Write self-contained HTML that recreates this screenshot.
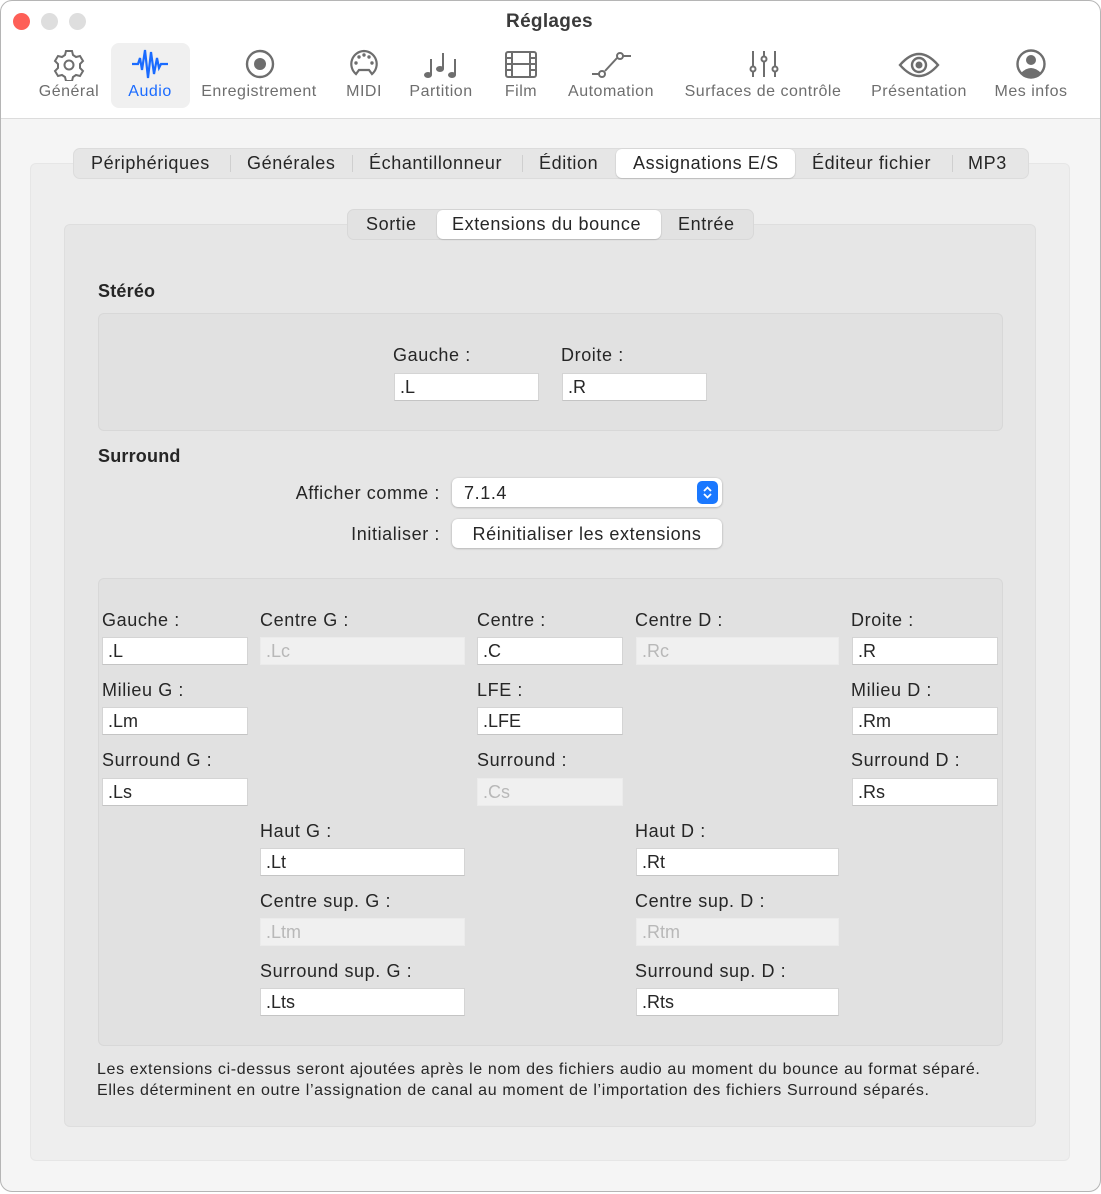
<!DOCTYPE html>
<html><head><meta charset="utf-8"><style>
*{box-sizing:border-box;margin:0;padding:0}
body{width:1101px;height:1194px;background:#fff;font-family:"Liberation Sans",sans-serif;color:#262626;position:relative;overflow:hidden}
.win{position:absolute;left:0;top:0;width:1101px;height:1192px;border-radius:12px;background:#f5f5f5;overflow:hidden}
.wb{position:absolute;left:0;top:0;width:1101px;height:1192px;border:1px solid #b5b5b5;border-radius:12px;pointer-events:none}
.tb{position:absolute;left:0;top:0;width:1101px;height:119px;background:#fff;border-bottom:1px solid #dcdcdc}
.a{position:absolute}
.t{position:absolute;white-space:nowrap;font-size:18px;letter-spacing:0.6px}
.r{text-align:right}
.tl{position:absolute;font-size:16px;color:#6e6e6e;white-space:nowrap;transform:translateX(-50%);top:83px;letter-spacing:0.5px}
.ic{position:absolute;top:47px}
.f{position:absolute;height:28px;background:#fff;border:1px solid #d4d4d4;border-bottom-color:#c4c4c4;font-size:18px;padding-left:5px;line-height:26px}
.f.d{background:#f0f0f0;border-color:#ebebeb;color:#b8b8b8}
.box{position:absolute;border-radius:6px}
</style></head><body>
<div class="win">
<div class="tb">
<div class="a" style="left:13px;top:13px;width:17px;height:17px;border-radius:50%;background:#fe5f57"></div>
<div class="a" style="left:41px;top:13px;width:17px;height:17px;border-radius:50%;background:#dedede"></div>
<div class="a" style="left:69px;top:13px;width:17px;height:17px;border-radius:50%;background:#dedede"></div>
<div class="t" style="left:0;width:1099px;text-align:center;top:11px;font-weight:bold;font-size:19px;color:#3a3a3a;letter-spacing:0.3px">Réglages</div>
<div class="a" style="left:111px;top:43px;width:79px;height:65px;background:#f0f0f0;border-radius:8px"></div>
<svg class="ic" style="left:52px" width="34" height="34" viewBox="0 0 34 34" fill="none" stroke="#6e6e6e" stroke-width="2"><path d="M14 4h6l1 4 3 2 4-1 3 5-3 3v4l3 3-3 5-4-1-3 2-1 4h-6l-1-4-3-2-4 1-3-5 3-3v-4l-3-3 3-5 4 1 3-2z"/><circle cx="17" cy="18" r="4.5"/></svg>
<svg class="ic" style="left:131px" width="38" height="34" viewBox="0 0 38 34" fill="none" stroke="#1a6bff" stroke-width="2.2"><path d="M1 17h6l2-6 2 12 3-20 3 28 3-26 3 22 3-16 2 10 2-4h7"/></svg>
<svg class="ic" style="left:243px" width="34" height="34" viewBox="0 0 34 34"><circle cx="17" cy="17" r="13" fill="none" stroke="#6e6e6e" stroke-width="2.4"/><circle cx="17" cy="17" r="6" fill="#6e6e6e"/></svg>
<svg class="ic" style="left:347px" width="34" height="34" viewBox="0 0 34 34" fill="#6e6e6e"><path d="M17 4a13 13 0 0 0-8 23l3-4h10l3 4a13 13 0 0 0-8-23z" fill="none" stroke="#6e6e6e" stroke-width="2.2"/><circle cx="9" cy="16" r="1.7"/><circle cx="12" cy="10" r="1.7"/><circle cx="17" cy="8" r="1.7"/><circle cx="22" cy="10" r="1.7"/><circle cx="25" cy="16" r="1.7"/></svg>
<svg class="ic" style="left:423px" width="36" height="34" viewBox="0 0 36 34" fill="#6e6e6e" stroke="#6e6e6e" stroke-width="2"><ellipse cx="5" cy="28" rx="4" ry="3" stroke="none"/><path d="M8 28V12" /><ellipse cx="17" cy="22" rx="4" ry="3" stroke="none"/><path d="M20 22V6"/><ellipse cx="29" cy="28" rx="4" ry="3" stroke="none"/><path d="M32 28V12"/></svg>
<svg class="ic" style="left:504px" width="34" height="34" viewBox="0 0 34 34" fill="none" stroke="#6e6e6e" stroke-width="2"><rect x="2" y="5" width="30" height="25" rx="2"/><path d="M8 5v25M26 5v25M8 17h18M2 11h6M2 17h6M2 23h6M26 11h6M26 17h6M26 23h6"/></svg>
<svg class="ic" style="left:591px" width="42" height="34" viewBox="0 0 42 34" fill="none" stroke="#6e6e6e" stroke-width="2"><path d="M1 27h7M14 24l12-13M32 9h8"/><circle cx="11" cy="27" r="3"/><circle cx="29" cy="9" r="3"/></svg>
<svg class="ic" style="left:749px" width="30" height="34" viewBox="0 0 30 34" fill="none" stroke="#6e6e6e" stroke-width="2"><path d="M4 4v26M15 4v26M26 4v26"/><circle cx="4" cy="22" r="2.5" fill="#fff"/><circle cx="15" cy="12" r="2.5" fill="#fff"/><circle cx="26" cy="22" r="2.5" fill="#fff"/></svg>
<svg class="ic" style="left:898px" width="42" height="34" viewBox="0 0 42 34"><path d="M2 18Q21-4 40 18Q21 40 2 18z" fill="none" stroke="#6e6e6e" stroke-width="2.4"/><circle cx="21" cy="18" r="7" fill="none" stroke="#6e6e6e" stroke-width="2.4"/><circle cx="21" cy="18" r="3.5" fill="#6e6e6e"/></svg>
<svg class="ic" style="left:1014px" width="34" height="34" viewBox="0 0 34 34"><circle cx="17" cy="17" r="13.5" fill="none" stroke="#6e6e6e" stroke-width="2.4"/><circle cx="17" cy="13" r="5" fill="#6e6e6e"/><path d="M7 26Q17 16 27 26Q17 34 7 26z" fill="#6e6e6e"/></svg>
<div class="tl" style="left:69px">Général</div>
<div class="tl" style="left:150px;color:#1a6bff">Audio</div>
<div class="tl" style="left:259px">Enregistrement</div>
<div class="tl" style="left:364px">MIDI</div>
<div class="tl" style="left:441px">Partition</div>
<div class="tl" style="left:521px">Film</div>
<div class="tl" style="left:611px">Automation</div>
<div class="tl" style="left:763px">Surfaces de contrôle</div>
<div class="tl" style="left:919px">Présentation</div>
<div class="tl" style="left:1031px">Mes infos</div>
</div>

<div class="box" style="left:30px;top:163px;width:1040px;height:998px;background:#eeeeee;border:1px solid #e6e6e6"></div>
<div class="box" style="left:73px;top:148px;width:956px;height:31px;background:#e6e6e6;border:1px solid #dcdcdc;border-radius:7px"></div>
<div class="box" style="left:616px;top:149px;width:179px;height:29px;background:#fff;box-shadow:0 0.5px 1.5px rgba(0,0,0,.25)"></div>
<div class="a" style="left:230px;top:155px;width:1px;height:17px;background:#cfcfcf"></div>
<div class="a" style="left:352px;top:155px;width:1px;height:17px;background:#cfcfcf"></div>
<div class="a" style="left:522px;top:155px;width:1px;height:17px;background:#cfcfcf"></div>
<div class="a" style="left:952px;top:155px;width:1px;height:17px;background:#cfcfcf"></div>
<div class="t" style="left:91px;top:153px">Périphériques</div>
<div class="t" style="left:247px;top:153px">Générales</div>
<div class="t" style="left:369px;top:153px">Échantillonneur</div>
<div class="t" style="left:539px;top:153px">Édition</div>
<div class="t" style="left:633px;top:153px">Assignations E/S</div>
<div class="t" style="left:812px;top:153px">Éditeur fichier</div>
<div class="t" style="left:968px;top:153px">MP3</div>

<div class="box" style="left:64px;top:224px;width:972px;height:903px;background:#e6e6e6;border:1px solid #dedede"></div>
<div class="box" style="left:347px;top:209px;width:407px;height:31px;background:#e2e2e2;border:1px solid #d8d8d8;border-radius:7px"></div>
<div class="box" style="left:437px;top:210px;width:224px;height:29px;background:#fff;box-shadow:0 0.5px 1.5px rgba(0,0,0,.25)"></div>
<div class="t" style="left:366px;top:214px">Sortie</div>
<div class="t" style="left:452px;top:214px">Extensions du bounce</div>
<div class="t" style="left:678px;top:214px">Entrée</div>

<div class="t" style="left:98px;top:281px;font-weight:bold;letter-spacing:0.2px">Stéréo</div>
<div class="box" style="left:98px;top:313px;width:905px;height:118px;background:#e1e1e1;border:1px solid #d8d8d8"></div>
<div class="t" style="left:393px;top:345px">Gauche :</div>
<div class="t" style="left:561px;top:345px">Droite :</div>
<div class="f" style="left:394px;top:373px;width:145px">.L</div>
<div class="f" style="left:562px;top:373px;width:145px">.R</div>

<div class="t" style="left:98px;top:446px;font-weight:bold;letter-spacing:0.2px">Surround</div>
<div class="t r" style="left:240px;width:200px;top:483px">Afficher comme :</div>
<div class="box" style="left:452px;top:478px;width:270px;height:29px;background:#fff;box-shadow:0 0.5px 2px rgba(0,0,0,.3)"></div>
<div class="t" style="left:464px;top:483px">7.1.4</div>
<div class="box" style="left:697px;top:481px;width:21px;height:23px;background:#1a78ff;border-radius:5px"></div>
<svg class="a" style="left:701px;top:484px" width="13" height="17" viewBox="0 0 13 17" fill="none" stroke="#fff" stroke-width="1.8"><path d="M3 7l3.5-3.5L10 7M3 10l3.5 3.5L10 10"/></svg>
<div class="t r" style="left:240px;width:200px;top:524px">Initialiser :</div>
<div class="box" style="left:452px;top:519px;width:270px;height:29px;background:#fff;box-shadow:0 0.5px 2px rgba(0,0,0,.3)"></div>
<div class="t" style="left:452px;width:270px;text-align:center;top:524px">Réinitialiser les extensions</div>

<div class="box" style="left:98px;top:578px;width:905px;height:468px;background:#e1e1e1;border:1px solid #d8d8d8"></div>
<div class="t" style="left:102px;top:610px">Gauche :</div>
<div class="t" style="left:260px;top:610px">Centre G :</div>
<div class="t" style="left:477px;top:610px">Centre :</div>
<div class="t" style="left:635px;top:610px">Centre D :</div>
<div class="t" style="left:851px;top:610px">Droite :</div>
<div class="f" style="left:102px;top:637px;width:146px">.L</div>
<div class="f d" style="left:260px;top:637px;width:205px">.Lc</div>
<div class="f" style="left:477px;top:637px;width:146px">.C</div>
<div class="f d" style="left:636px;top:637px;width:203px">.Rc</div>
<div class="f" style="left:852px;top:637px;width:146px">.R</div>

<div class="t" style="left:102px;top:680px">Milieu G :</div>
<div class="t" style="left:477px;top:680px">LFE :</div>
<div class="t" style="left:851px;top:680px">Milieu D :</div>
<div class="f" style="left:102px;top:707px;width:146px">.Lm</div>
<div class="f" style="left:477px;top:707px;width:146px">.LFE</div>
<div class="f" style="left:852px;top:707px;width:146px">.Rm</div>

<div class="t" style="left:102px;top:750px">Surround G :</div>
<div class="t" style="left:477px;top:750px">Surround :</div>
<div class="t" style="left:851px;top:750px">Surround D :</div>
<div class="f" style="left:102px;top:778px;width:146px">.Ls</div>
<div class="f d" style="left:477px;top:778px;width:146px">.Cs</div>
<div class="f" style="left:852px;top:778px;width:146px">.Rs</div>

<div class="t" style="left:260px;top:821px">Haut G :</div>
<div class="t" style="left:635px;top:821px">Haut D :</div>
<div class="f" style="left:260px;top:848px;width:205px">.Lt</div>
<div class="f" style="left:636px;top:848px;width:203px">.Rt</div>

<div class="t" style="left:260px;top:891px">Centre sup. G :</div>
<div class="t" style="left:635px;top:891px">Centre sup. D :</div>
<div class="f d" style="left:260px;top:918px;width:205px">.Ltm</div>
<div class="f d" style="left:636px;top:918px;width:203px">.Rtm</div>

<div class="t" style="left:260px;top:961px">Surround sup. G :</div>
<div class="t" style="left:635px;top:961px">Surround sup. D :</div>
<div class="f" style="left:260px;top:988px;width:205px">.Lts</div>
<div class="f" style="left:636px;top:988px;width:203px">.Rts</div>

<div class="t" style="left:97px;top:1059px;font-size:16px;letter-spacing:0.65px;line-height:21px">Les extensions ci-dessus seront ajoutées après le nom des fichiers audio au moment du bounce au format séparé.<br>Elles déterminent en outre l’assignation de canal au moment de l’importation des fichiers Surround séparés.</div>
</div>
<div class="wb"></div>
</body></html>
